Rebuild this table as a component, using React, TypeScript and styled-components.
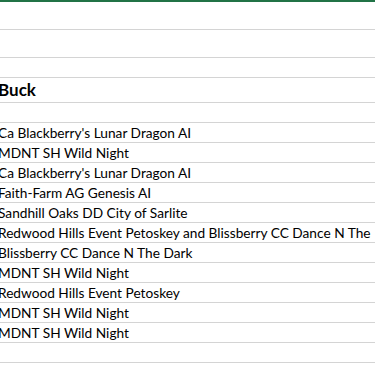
import React from "react";
import styled, { createGlobalStyle } from "styled-components";

const Global = createGlobalStyle`
  html, body { margin: 0; padding: 0; background: #ffffff; overflow: hidden; }
  #root { width: 375px; height: 366px; overflow: hidden; }
`;

const Sheet = styled.div`
  display: flex;
  flex-direction: column;
  width: 375px;
  height: 366px;
  overflow: hidden;
  background: #ffffff;
`;

const TopBar = styled.div`
  height: 2px;
  flex: none;
  background: #217346;
`;

const Row = styled.div<{ $h: number }>`
  flex: none;
  box-sizing: border-box;
  height: ${(p) => p.$h}px;
  border-bottom: 1px solid #d4d4d4;
  display: flex;
  align-items: flex-end;
  overflow: hidden;
  white-space: nowrap;
`;

const Cell = styled.span<{ $bold?: boolean }>`
  display: block;
  margin-left: -2px;
  padding-bottom: ${(p) => (p.$bold ? 2 : 1)}px;
  font-family: Lato, "Open Sans", sans-serif;
  font-size: ${(p) => (p.$bold ? 17 : 13.7)}px;
  font-weight: ${(p) => (p.$bold ? 700 : 400)};
  line-height: ${(p) => (p.$bold ? 20 : 16)}px;
  color: #000000;
`;

const rows: { h: number; text?: string; bold?: boolean }[] = [
  { h: 28 },
  { h: 28 },
  { h: 20 },
  { h: 25, text: "Buck", bold: true },
  { h: 20 },
  { h: 20, text: "Ca Blackberry's Lunar Dragon AI" },
  { h: 20, text: "MDNT SH Wild Night" },
  { h: 20, text: "Ca Blackberry's Lunar Dragon AI" },
  { h: 20, text: "Faith-Farm AG Genesis AI" },
  { h: 20, text: "Sandhill Oaks DD City of Sarlite" },
  { h: 20, text: "Redwood Hills Event Petoskey and Blissberry CC Dance N The" },
  { h: 20, text: "Blissberry CC Dance N The Dark" },
  { h: 20, text: "MDNT SH Wild Night" },
  { h: 20, text: "Redwood Hills Event Petoskey" },
  { h: 20, text: "MDNT SH Wild Night" },
  { h: 20, text: "MDNT SH Wild Night" },
  { h: 20 },
  { h: 20 },
];

export default function App() {
  return (
    <>
      <Global />
      <Sheet>
        <TopBar />
        {rows.map((r, i) => (
          <Row key={i} $h={r.h}>
            {r.text && <Cell $bold={r.bold}>{r.text}</Cell>}
          </Row>
        ))}
      </Sheet>
    </>
  );
}
